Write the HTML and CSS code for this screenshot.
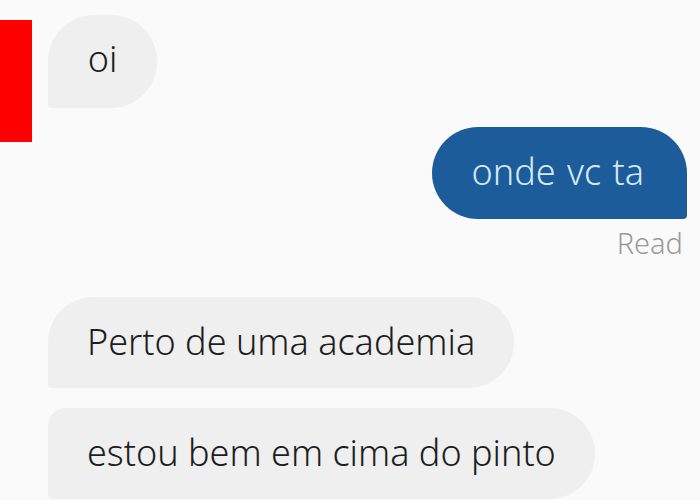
FILE: index.html
```html
<!DOCTYPE html>
<html>
<head>
<meta charset="utf-8">
<link rel="stylesheet" href="styles.css">
</head>
<body>
<div class="screen">
  <div class="avatar-strip"></div>
  <div class="chat">
    <div class="row in first">
      <div class="bubble in-bubble oi">oi</div>
    </div>
    <div class="row out">
      <div class="bubble out-bubble">onde vc ta</div>
    </div>
    <div class="status">Read</div>
    <div class="row in">
      <div class="bubble in-bubble tail-top">Perto de uma academia</div>
    </div>
    <div class="row in">
      <div class="bubble in-bubble tail-mid">estou bem em cima do pinto</div>
    </div>
  </div>
</div>
</body>
</html>
```
FILE: styles.css
```css
html, body {
  margin: 0;
  padding: 0;
  background: #fafafa;
}
.screen {
  position: relative;
  width: 700px;
  height: 500px;
  overflow: hidden;
  background: #fafafa;
  font-family: "Noto Sans", "Open Sans", sans-serif;
  color: #1e1e1e;
}
.avatar-strip {
  position: absolute;
  left: 0;
  top: 20px;
  width: 32px;
  height: 122px;
  background: #fe0000;
}
.chat {
  display: flex;
  flex-direction: column;
  padding: 15px 13px 0 48px;
}
.row {
  display: flex;
}
.row.out {
  justify-content: flex-end;
  margin-top: 19px;
}
.row.in + .row.in {
  margin-top: 20px;
}
.bubble {
  box-sizing: border-box;
  height: 91px;
  display: flex;
  align-items: center;
  font-size: 36px;
  font-weight: 350;
  white-space: nowrap;
}
.in-bubble {
  background: #efefef;
  color: #1e1e1e;
  padding: 0 39px 2px 39px;
  border-radius: 46px 46px 46px 4px;
}
.oi {
  width: 109px;
  height: 93px;
  justify-content: center;
  padding: 0 0 6px 0;
}
.tail-top {
  border-radius: 46px 46px 46px 4px;
}
.tail-mid {
  border-radius: 18px 46px 46px 4px;
}
.out-bubble {
  background: #1d5c9a;
  color: #d4e9f7;
  padding: 0 43px 4px 40px;
  height: 92px;
  word-spacing: 2px;
  border-radius: 46px 46px 4px 46px;
}
.status {
  align-self: flex-end;
  font-size: 29px;
  font-weight: 300;
  color: #9a9a9a;
  line-height: 34px;
  margin-top: 7px;
  margin-right: 4px;
}
.status + .row.in {
  margin-top: 37px;
}
```
